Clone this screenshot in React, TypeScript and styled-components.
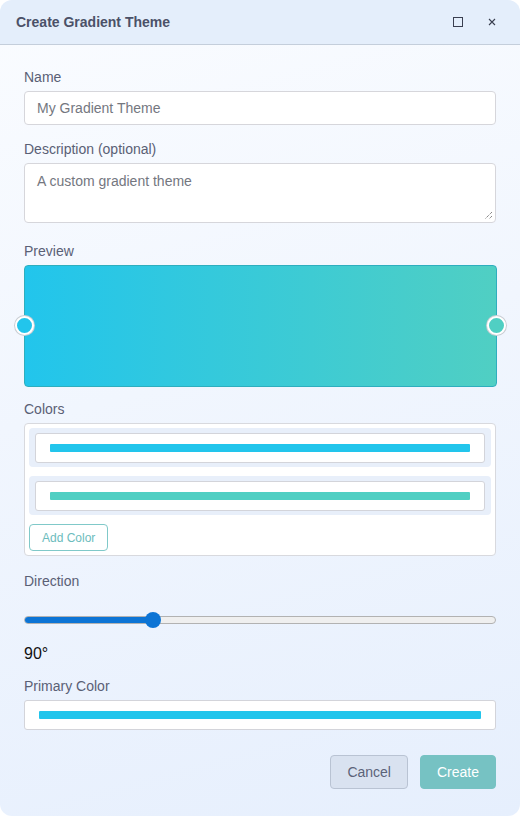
import React, { useState } from 'react';
import styled, { createGlobalStyle } from 'styled-components';

const GlobalStyle = createGlobalStyle`
  html, body {
    margin: 0;
    padding: 0;
    background: #ffffff;
    font-family: "Liberation Sans", Arial, sans-serif;
  }
  * { box-sizing: border-box; }
`;

const Dialog = styled.div`
  width: 520px;
  height: 816px;
  border-radius: 12px;
  overflow: hidden;
  display: flex;
  flex-direction: column;
  background: linear-gradient(165deg, #fafcff 0%, #f1f6fe 45%, #e6effd 100%);
`;

const Header = styled.div`
  height: 45px;
  flex: none;
  display: flex;
  align-items: center;
  padding: 0 16px;
  background: #e4eefb;
  border-bottom: 1px solid #c4cedb;
`;

const Title = styled.div`
  flex: 1;
  font-size: 14px;
  font-weight: 700;
  color: #4b5168;
`;

const HeaderButton = styled.button`
  width: 24px;
  height: 24px;
  margin-left: 10px;
  border: none;
  background: transparent;
  padding: 0;
  display: flex;
  align-items: center;
  justify-content: center;
  color: #3a3f50;
`;

const Body = styled.div`
  flex: 1;
  padding: 24px 24px 0;
  display: flex;
  flex-direction: column;
`;

const Label = styled.div<{ $mt?: number }>`
  font-size: 14px;
  color: #5a6075;
  line-height: 16px;
  margin-top: ${(p) => p.$mt ?? 0}px;
  margin-bottom: 6px;
`;

const TextInput = styled.div`
  height: 34px;
  background: #fff;
  border: 1px solid #d6d6db;
  border-radius: 4px;
  padding: 0 12px;
  display: flex;
  align-items: center;
  font-size: 14px;
  color: #74777f;
`;

const TextArea = styled.div`
  position: relative;
  height: 60px;
  background: #fff;
  border: 1px solid #d6d6db;
  border-radius: 4px;
  padding: 9px 12px;
  font-size: 14px;
  color: #74777f;
`;

const Resize = styled.svg`
  position: absolute;
  right: 2px;
  bottom: 2px;
`;

const Preview = styled.div`
  position: relative;
  height: 122px;
  margin-right: -1px;
  border: 1px solid #2eaebe;
  border-radius: 4px;
  background: linear-gradient(90deg, #22c5ec 0%, #50cfc3 100%);
`;

const Handle = styled.div<{ $side: 'left' | 'right'; $color: string }>`
  position: absolute;
  top: 50%;
  ${(p) => p.$side}: -10px;
  width: 19px;
  height: 19px;
  margin-top: -10px;
  border-radius: 50%;
  background: ${(p) => p.$color};
  border: 2px solid #fff;
  box-shadow: 0 0 0 1px #c9cdd3;
`;

const ColorsBox = styled.div`
  background: #fff;
  border: 1px solid #d8d9de;
  border-radius: 4px;
  padding: 4px;
  display: flex;
  flex-direction: column;
  gap: 9px;
`;

const ColorRow = styled.div`
  background: #e8effa;
  border-radius: 4px;
  padding: 5px 6px 4px 6px;
`;

const ColorWell = styled.div<{ $h?: number }>`
  height: ${(p) => p.$h ?? 30}px;
  background: #fff;
  border: 1px solid #d3d4da;
  border-radius: 3px;
  padding: 0 14px;
  display: flex;
  align-items: center;
`;

const Swatch = styled.div<{ $color: string }>`
  flex: 1;
  height: 8px;
  border-radius: 1px;
  background: ${(p) => p.$color};
`;

const AddButton = styled.button`
  align-self: flex-start;
  height: 27px;
  padding: 0 12px;
  background: #fff;
  border: 1px solid #80c9c9;
  border-radius: 4px;
  color: #6cbcbd;
  font-family: inherit;
  font-size: 12px;
`;

const SliderWrap = styled.div`
  position: relative;
  height: 16px;
  margin-top: 17px;
  display: flex;
  align-items: center;
`;

const Track = styled.div`
  flex: 1;
  height: 8px;
  border: 1px solid #b2b2b2;
  border-radius: 4px;
  background: #efefef;
  overflow: hidden;
`;

const Fill = styled.div`
  height: 100%;
  background: #0c74d5;
`;

const Thumb = styled.div`
  position: absolute;
  top: 0;
  width: 16px;
  height: 16px;
  margin-left: -8px;
  border-radius: 50%;
  background: #0c74d5;
`;

const Degrees = styled.div`
  font-size: 16px;
  color: #111;
  margin-top: 17px;
  line-height: 18px;
`;

const Footer = styled.div`
  display: flex;
  justify-content: flex-end;
  gap: 12px;
  margin-top: 25px;
`;

const Button = styled.button<{ $primary?: boolean }>`
  height: 34px;
  padding: 0 16px;
  border-radius: 4px;
  font-family: inherit;
  font-size: 14px;
  border: 1px solid ${(p) => (p.$primary ? '#76c2c3' : '#b9c3d3')};
  background: ${(p) => (p.$primary ? '#76c2c3' : '#d9e2f0')};
  color: ${(p) => (p.$primary ? '#ffffff' : '#5b6379')};
`;

export default function App() {
  const [angle] = useState(90);
  const colors = ['#22c5ec', '#50cfc3'];
  const pct = 27.4;

  return (
    <>
      <GlobalStyle />
      <Dialog>
        <Header>
          <Title>Create Gradient Theme</Title>
          <HeaderButton aria-label="maximize">
            <svg width="10" height="10" viewBox="0 0 10 10">
              <rect x="0.5" y="0.5" width="9" height="9" fill="none" stroke="#3a3f50" strokeWidth="1" />
            </svg>
          </HeaderButton>
          <HeaderButton aria-label="close">
            <svg width="10" height="10" viewBox="0 0 10 10">
              <path d="M2 2 L8 8 M8 2 L2 8" stroke="#3a3f50" strokeWidth="1.1" />
            </svg>
          </HeaderButton>
        </Header>
        <Body>
          <Label>Name</Label>
          <TextInput>My Gradient Theme</TextInput>

          <Label $mt={16}>Description (optional)</Label>
          <TextArea>
            A custom gradient theme
            <Resize width="9" height="9" viewBox="0 0 9 9">
              <path d="M8 1 L1 8 M8 5 L5 8" stroke="#555" strokeWidth="1" strokeDasharray="1 1" />
            </Resize>
          </TextArea>

          <Label $mt={20}>Preview</Label>
          <Preview>
            <Handle $side="left" $color={colors[0]} />
            <Handle $side="right" $color={colors[1]} />
          </Preview>

          <Label $mt={14}>Colors</Label>
          <ColorsBox>
            {colors.map((c) => (
              <ColorRow key={c}>
                <ColorWell>
                  <Swatch $color={c} />
                </ColorWell>
              </ColorRow>
            ))}
            <AddButton>Add Color</AddButton>
          </ColorsBox>

          <Label $mt={17}>Direction</Label>
          <SliderWrap>
            <Track>
              <Fill style={{ width: `${pct}%` }} />
            </Track>
            <Thumb style={{ left: `${pct}%` }} />
          </SliderWrap>
          <Degrees>{angle}°</Degrees>

          <Label $mt={15}>Primary Color</Label>
          <ColorWell $h={30}>
            <Swatch $color={colors[0]} />
          </ColorWell>

          <Footer>
            <Button>Cancel</Button>
            <Button $primary>Create</Button>
          </Footer>
        </Body>
      </Dialog>
    </>
  );
}
